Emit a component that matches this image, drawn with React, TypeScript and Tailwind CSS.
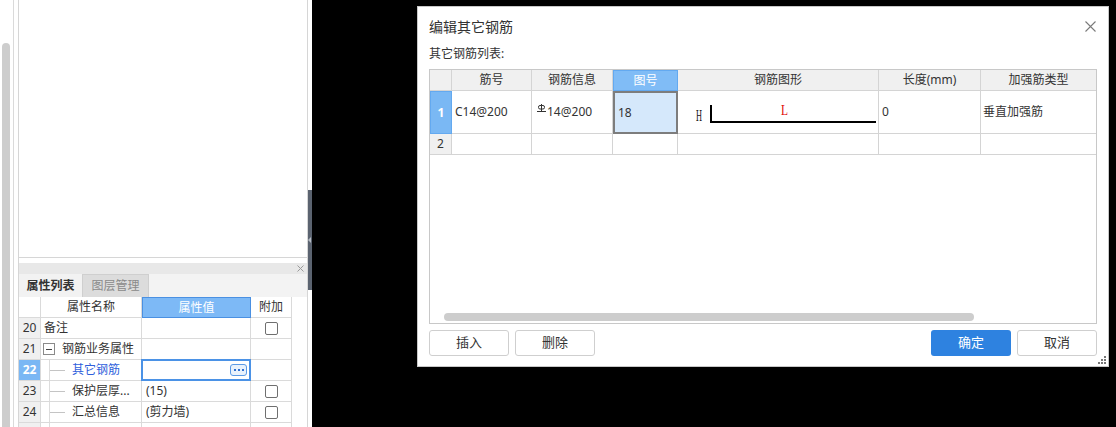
import React from 'react'

const COLS = [22, 80, 81, 65, 201, 102, 115]
const HEADS = ['', '筋号', '钢筋信息', '图号', '钢筋图形', '长度(mm)', '加强筋类型']

function Checkbox() {
  return <div className="h-[13px] w-[13px] rounded-[2px] border border-[#6f6f6f] bg-white" />
}

function TreeLine() {
  return (
    <svg width="29" height="20" className="shrink-0">
      <line x1="6.5" y1="0" x2="6.5" y2="21" stroke="#dcdcdc" />
      <line x1="7" y1="10.5" x2="22" y2="10.5" stroke="#c4c4c4" />
    </svg>
  )
}

type LeftRow = {
  num: string
  name: string
  value?: string
  check?: boolean
  kind?: 'plain' | 'group' | 'child' | 'active'
}

const LEFT_ROWS: LeftRow[] = [
  { num: '20', name: '备注', check: true },
  { num: '21', name: '钢筋业务属性', kind: 'group' },
  { num: '22', name: '其它钢筋', kind: 'active' },
  { num: '23', name: '保护层厚...', value: '(15)', check: true, kind: 'child' },
  { num: '24', name: '汇总信息', value: '(剪力墙)', check: true, kind: 'child' },
  { num: '', name: '', kind: 'child' },
]

function PropRow({ row }: { row: LeftRow }) {
  const active = row.kind === 'active'
  return (
    <div className="flex h-[21px] shrink-0">
      <div
        className={`flex w-[22px] shrink-0 items-center justify-center border-b border-r border-[#dadada] ${
          active ? 'bg-[#7ab7f4] font-bold text-white' : 'bg-[#f0f0f0]'
        }`}
      >
        {row.num}
      </div>
      <div className="flex w-[101px] shrink-0 items-center overflow-hidden whitespace-nowrap border-b border-r border-[#dadada] pl-[2px]">
        {row.kind === 'group' && (
          <>
            <div className="flex h-[12px] w-[12px] shrink-0 items-center justify-center border border-[#8a8a8a] bg-white">
              <div className="h-px w-[6px] bg-[#444]" />
            </div>
            <span className="ml-[7px]">{row.name}</span>
          </>
        )}
        {(row.kind === 'child' || active) && (
          <>
            <TreeLine />
            <span className={active ? 'text-[#2f5fdc]' : ''}>{row.name}</span>
          </>
        )}
        {!row.kind && <span className="ml-[1px]">{row.name}</span>}
      </div>
      <div className="relative flex w-[109px] shrink-0 items-center border-b border-r border-[#dadada] pl-[4px]">
        {active ? (
          <div className="absolute inset-[-1px] flex items-center justify-end border-2 border-[#4b92e6] bg-white pr-[2px]">
            <div className="flex h-[12px] w-[17px] items-center justify-center gap-[2px] rounded-[3px] border border-[#5b9ae6] bg-[#e9f2fc]">
              <span className="h-[2px] w-[2px] bg-[#2f6fd0]" />
              <span className="h-[2px] w-[2px] bg-[#2f6fd0]" />
              <span className="h-[2px] w-[2px] bg-[#2f6fd0]" />
            </div>
          </div>
        ) : (
          row.value
        )}
      </div>
      <div className="flex w-[41px] shrink-0 items-center justify-center border-b border-r border-[#dadada]">
        {row.check && <Checkbox />}
      </div>
      <div className="flex-1" />
    </div>
  )
}

function LeftPanel() {
  return (
    <div className="relative flex h-full w-[312px] shrink-0 bg-white">
      <div className="h-full w-[14px] shrink-0 border-r border-[#dadada] bg-white pl-[2px] pt-[43px]">
        <div className="h-full w-[8px] rounded-t-[4px] bg-[#cdcdcd]" />
      </div>
      <div className="w-[4px] shrink-0" />
      <div className="flex w-[290px] shrink-0 flex-col border-x border-[#d6d6d6]">
        <div className="h-[258px] shrink-0 border-b border-[#d6d6d6]" />
        <div className="h-[5px] shrink-0" />
        <div className="flex h-[11px] shrink-0 items-center justify-end bg-[#e8e8e8] pr-[3px]">
          <svg width="7" height="7">
            <path d="M0.5 0.5 L6.5 6.5 M6.5 0.5 L0.5 6.5" stroke="#9a9a9a" strokeWidth="1" />
          </svg>
        </div>
        <div className="flex h-[23px] shrink-0 bg-[#f3f3f3]">
          <div className="flex w-[63px] items-center justify-center bg-[#f2f2f2] font-bold text-[#333]">属性列表</div>
          <div className="flex w-[67px] items-center justify-center border-x border-t border-[#cfcfcf] bg-[#dcdcdc] text-[#8a8a8a]">
            图层管理
          </div>
        </div>
        <div className="flex h-[21px] shrink-0 bg-white">
          <div className="w-[22px] shrink-0 border-b border-r border-[#dadada]" />
          <div className="flex w-[101px] shrink-0 items-center justify-center border-b border-r border-[#dadada]">属性名称</div>
          <div className="flex w-[109px] shrink-0 items-center justify-center border border-[#4a90e2] bg-[#7db9f6] text-white">
            属性值
          </div>
          <div className="flex w-[41px] shrink-0 items-center justify-center border-b border-r border-[#dadada]">附加</div>
          <div className="flex-1" />
        </div>
        {LEFT_ROWS.map((r, i) => (
          <PropRow key={i} row={r} />
        ))}
      </div>
      <div className="absolute left-[308px] top-[190px] flex h-[100px] w-[4px] items-center bg-[#5b6370]">
        <div className="h-0 w-0 border-y-[3px] border-r-[3px] border-y-transparent border-r-[#b4bac2]" />
      </div>
    </div>
  )
}

function RebarGlyph() {
  return (
    <svg width="9" height="9" className="mb-[7px] mr-[1px] shrink-0">
      <line x1="4.5" y1="0" x2="4.5" y2="8" stroke="#333" strokeWidth="1" />
      <rect x="1.5" y="1.5" width="6" height="3.5" rx="1.5" fill="none" stroke="#333" strokeWidth="1" />
      <line x1="0" y1="7.5" x2="9" y2="7.5" stroke="#333" strokeWidth="1" />
    </svg>
  )
}

function ShapeDrawing() {
  return (
    <svg width="200" height="42">
      <text x="18" y="30" fontSize="17" textLength="6" lengthAdjust="spacingAndGlyphs" fontFamily="Liberation Serif, serif" fill="#111">
        H
      </text>
      <path d="M33 14 L33 31 L198 31" fill="none" stroke="#000" strokeWidth="2" />
      <text x="103" y="24" fontSize="14" textLength="7" lengthAdjust="spacingAndGlyphs" fontFamily="Liberation Serif, serif" fill="#e00000">
        L
      </text>
    </svg>
  )
}

function Dialog() {
  return (
    <div className="relative flex h-[361px] w-[692px] flex-col border border-[#c8c8c8] bg-white px-[11px]">
      <div className="flex h-[38px] shrink-0 items-center justify-between">
        <span className="text-[14px] text-[#333]">编辑其它钢筋</span>
        <svg width="11" height="11" className="mr-[1px]">
          <path d="M0.5 0.5 L10.5 10.5 M10.5 0.5 L0.5 10.5" stroke="#7a7a7a" strokeWidth="1.1" />
        </svg>
      </div>
      <div className="flex h-[18px] shrink-0 items-center">其它钢筋列表:</div>
      <div className="mt-[6px] flex h-[255px] shrink-0 flex-col border border-[#c8c8c8]">
        <div className="flex h-[21px] shrink-0">
          {HEADS.map((h, i) => (
            <div
              key={i}
              style={{ width: COLS[i] }}
              className={`flex shrink-0 items-center justify-center ${
                i === 3
                  ? 'border border-[#63a9f0] bg-[#80bcf6] text-white'
                  : `border-b border-[#d4d4d4] bg-[#f0f0f0] ${i < 6 ? 'border-r' : ''}`
              }`}
            >
              {h}
            </div>
          ))}
        </div>
        <div className="flex h-[43px] shrink-0">
          <div style={{ width: COLS[0] }} className="flex shrink-0 items-center justify-center border border-[#63a9f0] bg-[#7ab8f4] font-bold text-white">
            1
          </div>
          <div style={{ width: COLS[1] }} className="flex shrink-0 items-center border-b border-r border-[#d4d4d4] pl-[3px]">
            C14@200
          </div>
          <div style={{ width: COLS[2] }} className="flex shrink-0 items-center border-b border-r border-[#d4d4d4] pl-[5px]">
            <RebarGlyph />
            14@200
          </div>
          <div style={{ width: COLS[3] }} className="flex shrink-0 items-center border-2 border-[#7d7d7d] bg-[#d5e8fb] pl-[3px]">
            18
          </div>
          <div style={{ width: COLS[4] }} className="flex shrink-0 items-center border-b border-r border-[#d4d4d4]">
            <ShapeDrawing />
          </div>
          <div style={{ width: COLS[5] }} className="flex shrink-0 items-center border-b border-r border-[#d4d4d4] pl-[3px]">
            0
          </div>
          <div style={{ width: COLS[6] }} className="flex shrink-0 items-center border-b border-[#d4d4d4] pl-[2px]">
            垂直加强筋
          </div>
        </div>
        <div className="flex h-[21px] shrink-0">
          {COLS.map((w, i) => (
            <div
              key={i}
              style={{ width: w }}
              className={`flex shrink-0 items-center justify-center border-b border-[#d4d4d4] ${i < 6 ? 'border-r' : ''} ${
                i === 0 ? 'bg-[#f0f0f0]' : ''
              }`}
            >
              {i === 0 ? '2' : ''}
            </div>
          ))}
        </div>
        <div className="flex-1" />
        <div className="mb-[2px] ml-[14px] h-[8px] w-[530px] shrink-0 rounded-full bg-[#cdcdcd]" />
      </div>
      <div className="mt-[6px] flex h-[26px] shrink-0 items-stretch text-[13px]">
        <button className="w-[80px] rounded-[3px] border border-[#cfcfcf] bg-white text-[#333]">插入</button>
        <button className="ml-[6px] w-[80px] rounded-[3px] border border-[#cfcfcf] bg-white text-[#333]">删除</button>
        <div className="flex-1" />
        <button className="w-[80px] rounded-[3px] bg-[#2e82e0] text-white">确定</button>
        <button className="ml-[6px] w-[80px] rounded-[3px] border border-[#cfcfcf] bg-white text-[#333]">取消</button>
      </div>
      <svg width="8" height="8" className="absolute bottom-[2px] right-[2px]">
        <rect x="6" y="0" width="2" height="2" fill="#777" />
        <rect x="3" y="3" width="2" height="2" fill="#777" />
        <rect x="6" y="3" width="2" height="2" fill="#777" />
        <rect x="0" y="6" width="2" height="2" fill="#777" />
        <rect x="3" y="6" width="2" height="2" fill="#777" />
        <rect x="6" y="6" width="2" height="2" fill="#777" />
      </svg>
    </div>
  )
}

export default function App() {
  return (
    <div className="flex h-[427px] w-[1116px] overflow-hidden bg-black font-[family-name:Noto_Sans,Noto_Sans_CJK_SC,sans-serif] text-[12px] text-[#333]">
      <LeftPanel />
      <div className="flex-1 pl-[105px] pt-[6px]">
        <Dialog />
      </div>
    </div>
  )
}
